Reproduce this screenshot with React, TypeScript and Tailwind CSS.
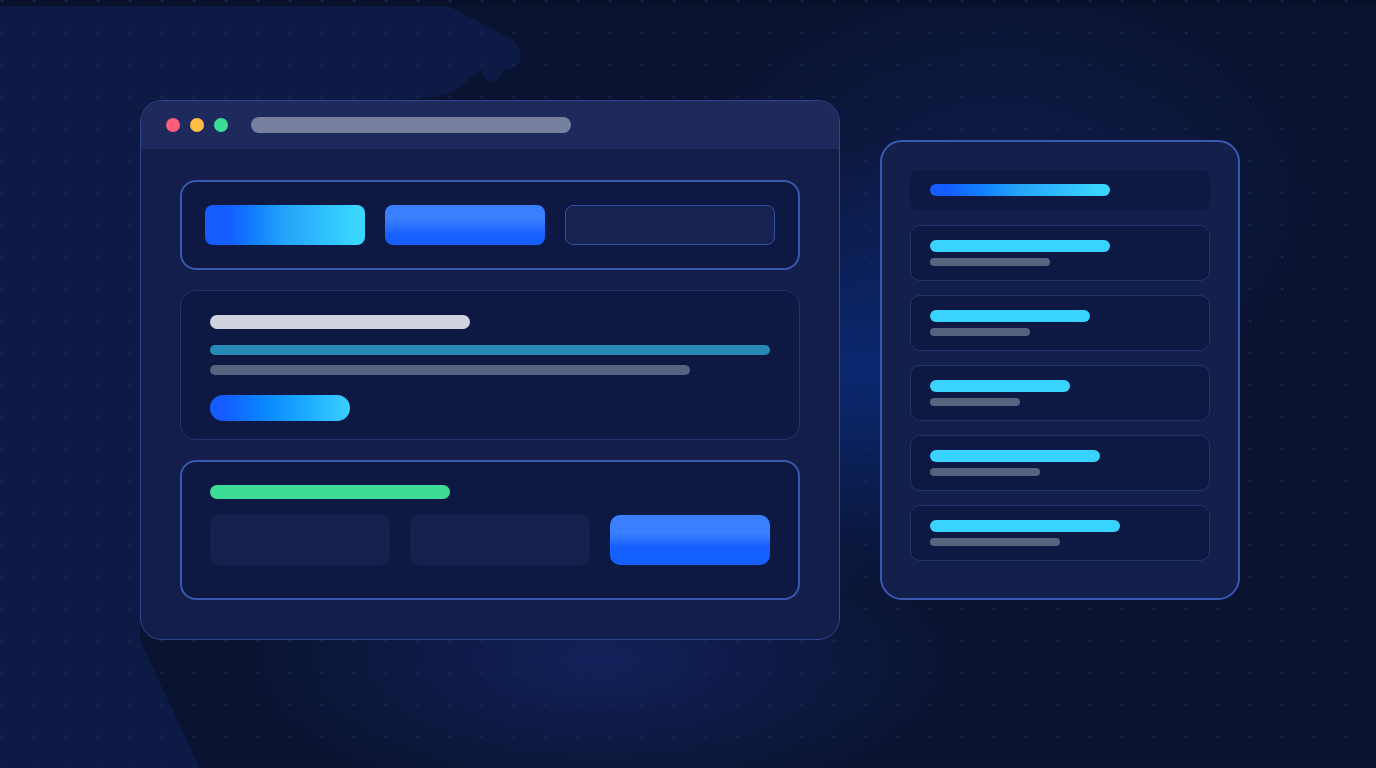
import React from 'react';

const listRows = [
  { main: 'w-[180px]', sub: 'w-[120px]' },
  { main: 'w-[160px]', sub: 'w-[100px]' },
  { main: 'w-[140px]', sub: 'w-[90px]' },
  { main: 'w-[170px]', sub: 'w-[110px]' },
  { main: 'w-[190px]', sub: 'w-[130px]' },
];

function Backdrop() {
  return (
    <div className="absolute inset-0 pointer-events-none">
      {/* soft glows */}
      <div className="absolute inset-0 bg-[radial-gradient(ellipse_360px_150px_at_600px_660px,#12215a_0%,transparent_100%)]" />
      <div className="absolute inset-0 bg-[radial-gradient(ellipse_320px_220px_at_1000px_200px,#0f1c4c_0%,transparent_100%)]" />
      {/* lighter shape on the left */}
      <svg className="absolute inset-0" width="1376" height="768" viewBox="0 0 1376 768">
        <path
          d="M0 6 H448 L510 38 Q524 50 520 62 Q514 70 504 70 Q500 82 490 82 Q482 80 482 68 Q470 80 452 92 L430 98 L140 110 L140 640 L200 768 H0 Z"
          fill="#0c1a45"
        />
        <rect x="0" y="0" width="1376" height="6" fill="#08102a" />
      </svg>
      {/* dot grid */}
      <div className="absolute inset-0 bg-[radial-gradient(circle,#17264f_1.2px,transparent_1.8px)] bg-size-[32px_32px] bg-[position:-14px_-15px]" />
    </div>
  );
}

function MainWindow() {
  return (
    <div className="w-[700px] h-[540px] rounded-[22px] border border-[#2f4690] bg-[#131f4a] overflow-hidden flex flex-col shrink-0">
      {/* title bar */}
      <div className="h-[48px] bg-[#1e2a5c] flex items-center pl-[25px]">
        <div className="flex gap-[10px]">
          <span className="w-[14px] h-[14px] rounded-full bg-[#ff5c7a]" />
          <span className="w-[14px] h-[14px] rounded-full bg-[#ffbe45]" />
          <span className="w-[14px] h-[14px] rounded-full bg-[#3ddc97]" />
        </div>
        <div className="ml-[23px] w-[320px] h-[16px] rounded-full bg-[#7880a0]" />
      </div>

      <div className="flex flex-col gap-[20px] px-[39px] pt-[31px]">
        {/* toolbar card */}
        <div className="h-[90px] rounded-[16px] border-2 border-[#3a58b2] bg-[#0d1943] flex items-center gap-[20px] px-[23px]">
          <div className="w-[160px] h-[40px] rounded-[8px] bg-linear-to-r from-[#165dff] from-15% via-[#25a4f9] to-[#3ad6ff] to-95%" />
          <div className="w-[160px] h-[40px] rounded-[8px] bg-linear-to-b from-[#3a7fff] from-35% to-[#1560ff] to-75%" />
          <div className="w-[210px] h-[40px] rounded-[8px] border border-[#34509e] bg-[#16224f]" />
        </div>

        {/* content card */}
        <div className="h-[150px] rounded-[16px] border border-[#23346a] bg-[#0d1943] px-[29px] pt-[24px] flex flex-col">
          <div className="w-[260px] h-[14px] rounded-full bg-[#d0d3de]" />
          <div className="mt-[16px] w-[560px] h-[10px] rounded-full bg-[#2789b6]" />
          <div className="mt-[10px] w-[480px] h-[10px] rounded-full bg-[#586380]" />
          <div className="mt-[20px] w-[140px] h-[26px] rounded-full bg-linear-to-r from-[#155cff] from-10% to-[#3ad0ff]" />
        </div>

        {/* form card */}
        <div className="h-[140px] rounded-[16px] border-2 border-[#3a58b2] bg-[#0d1943] px-[28px] pt-[23px] flex flex-col">
          <div className="w-[240px] h-[14px] rounded-full bg-[#3ddc97]" />
          <div className="mt-[16px] flex gap-[20px]">
            <div className="w-[180px] h-[50px] rounded-[10px] bg-[#15224d]" />
            <div className="w-[180px] h-[50px] rounded-[10px] bg-[#15224d]" />
            <div className="w-[160px] h-[50px] rounded-[10px] bg-linear-to-b from-[#3a7fff] from-35% to-[#1460ff] to-65%" />
          </div>
        </div>
      </div>
    </div>
  );
}

function SidePanel() {
  return (
    <div className="mt-[40px] w-[360px] h-[460px] rounded-[22px] border-2 border-[#3a58b2] bg-[#14204c] px-[28px] pt-[28px] flex flex-col gap-[14px] shrink-0">
      <div className="h-[40px] rounded-[8px] bg-[#0d1943] flex items-center px-[20px] mb-[1px]">
        <div className="w-[180px] h-[12px] rounded-full bg-linear-to-r from-[#165dff] from-10% via-[#25a4f9] to-[#3ad6ff] to-95%" />
      </div>
      {listRows.map((row, i) => (
        <div
          key={i}
          className="h-[56px] rounded-[10px] border border-[#23346a] bg-[#0d1943] flex flex-col justify-center gap-[6px] px-[19px]"
        >
          <div className={`${row.main} h-[12px] rounded-full bg-[#38d4ff]`} />
          <div className={`${row.sub} h-[8px] rounded-full bg-[#586380]`} />
        </div>
      ))}
    </div>
  );
}

export default function App() {
  return (
    <div className="relative w-[1376px] h-[768px] overflow-hidden bg-[#0a1330] font-['Inter',sans-serif]">
      <Backdrop />
      <div className="relative flex pl-[140px] pt-[100px]">
        <MainWindow />
        {/* glow strip between the two panels */}
        <div className="w-[40px] mt-[45px] h-[450px] bg-linear-to-b from-[#0f1c48]/0 via-[#0a2870] to-[#0f1c48]/0" />
        <SidePanel />
      </div>
    </div>
  );
}
